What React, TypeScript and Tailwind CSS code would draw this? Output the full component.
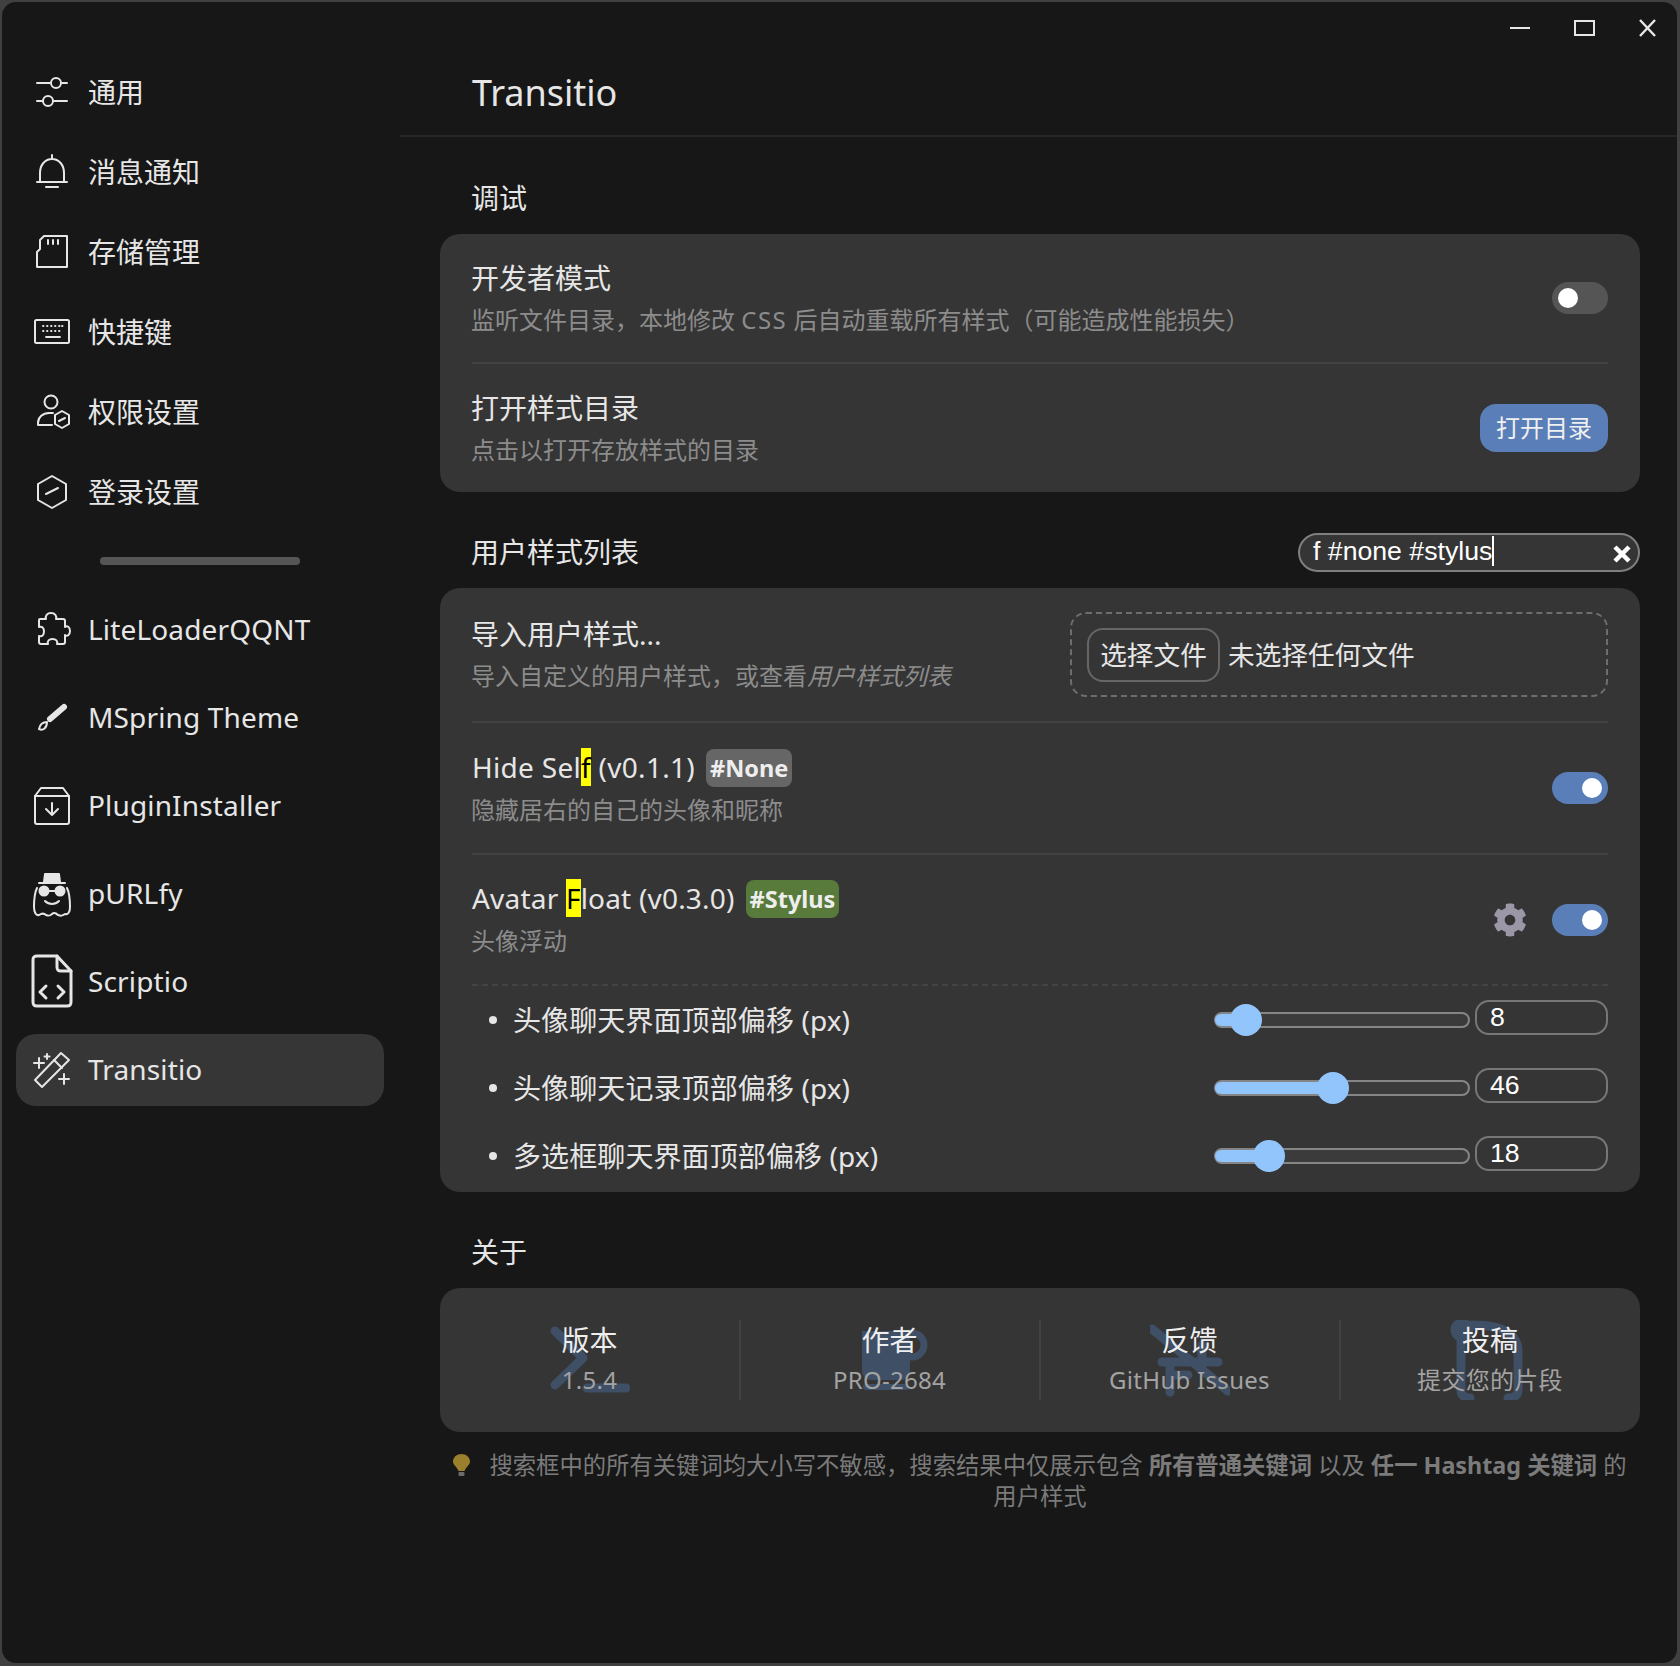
import React from "react";
import { FaCog } from "react-icons/fa";

function Ico({ children }: { children: React.ReactNode }) {
  return (
    <svg viewBox="0 0 40 40" className="w-10 h-10 shrink-0 overflow-visible" fill="none" stroke="#e6e6e6" strokeWidth="2" strokeLinecap="round" strokeLinejoin="round">
      {children}
    </svg>
  );
}

const icons: Record<string, React.ReactNode> = {
  general: (
    <Ico>
      <path d="M5 11H18M30 11H35M5 29H11M21 29H35" />
      <circle cx="24" cy="11" r="5" />
      <circle cx="16" cy="29" r="5" />
    </Ico>
  ),
  bell: (
    <Ico>
      <path d="M20 3V7M5 30H35M8 30V21C8 13 13 7 20 7S32 13 32 21V30M14 35H26" />
    </Ico>
  ),
  sd: (
    <Ico>
      <path d="M12 4H35V35H5V20L8 17V8Z" />
      <path d="M16 8V12M21 8V12M26 8V12" />
    </Ico>
  ),
  keyboard: (
    <Ico>
      <rect x="3" y="8" width="34" height="23" rx="1.5" />
      <path d="M11 14H11.5M15 14H15.5M19 14H19.5M23 14H23.5M27 14H27.5M30 14H30.5M11 19H11.5M15 19H15.5M19 19H19.5M23 19H23.5M27 19H27.5M14 25H28" strokeWidth="1.8" />
    </Ico>
  ),
  perm: (
    <Ico>
      <circle cx="19" cy="10" r="6.5" />
      <path d="M6 33V31C6 25 11 21 17 21H21M6 33H20" />
      <path d="M30 19L37 23V32L30 36L23 32V23Z" />
      <path d="M27 29L33 26" />
    </Ico>
  ),
  login: (
    <Ico>
      <path d="M20 4L34 12V28L20 36L6 28V12Z" />
      <path d="M14 22L26 16" />
    </Ico>
  ),
  puzzle: (
    <Ico>
      <path d="M8 9H14C13 6 15 3 19 3C23 3 25 6 24 9H31C32 9 33 10 33 11V17C35 15 38 17 38 21C38 25 35 27 33 25V32C33 33 32 34 31 34H25C26 31 24 29 20.500 29C17 29 15 31 16 34H9C8 34 7 33 7 32V26C10 27 12 25 12 21.500C12 18 10 16 7 17V10C7 9.500 7.500 9 8 9Z" />
    </Ico>
  ),
  brush: (
    <Ico>
      <path d="M32 9L18 21" strokeWidth="6" />
      <path d="M15 24C11 24 8 26 7 31C11 33 15 30 15 24Z" />
    </Ico>
  ),
  installer: (
    <Ico>
      <path d="M9 2H31L37 10V36C37 37 36 38 35 38H5C4 38 3 37 3 36V10Z" />
      <path d="M3 10H37M20 17V29M14 23L20 29L26 23" />
    </Ico>
  ),
  ghost: (
    <Ico>
      <path d="M7 9H33M12 8L13 0H27L28 8" fill="#e6e6e6" />
      <path d="M5 14C3 18 2 24 2 33C2 38 4 42 7 41C10 39 12 39 14 41C17 42 18 42 20 40C22 38 24 39 26 41C29 42 30 42 33 40C36 41 38 38 38 33C38 24 37 18 35 14" />
      <circle cx="12" cy="17" r="4.5" fill="#e6e6e6" />
      <circle cx="28" cy="17" r="4.5" fill="#e6e6e6" />
      <path d="M16 17H24M13 27C17 31 23 31 27 27" />
    </Ico>
  ),
  file: (
    <Ico>
      <g strokeWidth="3">
        <path d="M25 -6H5C2 -6 1 -5 1 -2V40C1 43 2 44 5 44H35C38 44 39 43 39 40V9Z" />
        <path d="M25 -6V5C25 8 26 9 29 9H39" />
        <path d="M14 24L8 30L14 36M26 24L32 30L26 36" />
      </g>
    </Ico>
  ),
  wand: (
    <Ico>
      <path d="M29 3L37 10L10 37L3 30Z" />
      <path d="M22 10L30 18M7 8V18M2 13H12M15 4V9M12.5 6.5H17.5M32 24V34M27 29H37" />
    </Ico>
  ),
};

const top = [
  ["general", "通用"],
  ["bell", "消息通知"],
  ["sd", "存储管理"],
  ["keyboard", "快捷键"],
  ["perm", "权限设置"],
  ["login", "登录设置"],
];
const plugins = [
  ["puzzle", "LiteLoaderQQNT"],
  ["brush", "MSpring Theme"],
  ["installer", "PluginInstaller"],
  ["ghost", "pURLfy"],
  ["file", "Scriptio"],
  ["wand", "Transitio"],
];

function Sidebar() {
  return (
    <aside className="w-[398px] shrink-0 pt-[50px] pl-[14px] pr-4">
      {top.map(([i, t]) => (
        <div key={t} className="h-20 flex items-center gap-4 pl-4 text-[28px]">
          {icons[i]}
          <span>{t}</span>
        </div>
      ))}
      <div className="h-2 w-[200px] rounded-full bg-[#555555] mx-auto mt-[25px] mb-[29px]" />
      <div className="flex flex-col gap-4">
        {plugins.map(([i, t]) => (
          <div key={t} className={`h-[72px] flex items-center gap-4 pl-4 rounded-[20px] text-[28px] tracking-[0.15px] ${t === "Transitio" ? "bg-[#363636]" : ""}`}>
            {icons[i]}
            <span className="-mt-[2px]">{t}</span>
          </div>
        ))}
      </div>
    </aside>
  );
}

function Toggle({ on }: { on?: boolean }) {
  return (
    <div className={`w-14 h-8 rounded-full shrink-0 flex items-center px-[6px] ${on ? "bg-[#5a7fb8] justify-end" : "bg-[#555555] justify-start"}`}>
      <div className="w-5 h-5 rounded-full bg-white" />
    </div>
  );
}

function Row({ title, sub, right, dash, h }: { title: React.ReactNode; sub: React.ReactNode; right?: React.ReactNode; dash?: boolean; h: string }) {
  return (
    <div className={`mx-8 flex items-center justify-between ${dash ? "border-b-2 border-dashed border-[#444444]" : "border-b-2 border-[#424242]"} ${h}`}>
      <RowText title={title} sub={sub} />
      {right}
    </div>
  );
}

function RowText({ title, sub }: { title: React.ReactNode; sub: React.ReactNode }) {
  return (
    <div className="pt-[1px]">
      <div className={`h-10 leading-10 text-[28px] flex items-center ${typeof title === "string" ? "pt-[2px] -ml-px" : ""}`}>{title}</div>
      <div className="h-[42px] leading-[42px] text-[24px] text-[#8c8c8c] mt-[2px] -ml-px">{sub}</div>
    </div>
  );
}

function Mark({ children }: { children: React.ReactNode }) {
  return <mark className="bg-[#ffff00] text-black">{children}</mark>;
}

function Tag({ children, color }: { children: React.ReactNode; color: string }) {
  return <span className={`ml-[11px] mt-[2px] h-[38px] leading-[38px] px-1 rounded-lg font-bold text-[23.5px] text-[#eeeeee] ${color}`}>{children}</span>;
}

function SliderRow({ label, pos, val }: { label: string; pos: number; val: string }) {
  return (
    <div className="h-[68px] mx-8 flex items-center">
      <div className="w-[8px] h-[8px] rounded-full bg-[#e6e6e6] ml-[17px] mr-4 shrink-0" />
      <div className="text-[28px] flex-1 tracking-[0.1px]">{label}</div>
      <div className="relative w-[256px] h-4 rounded-full border-2 border-[#858585] bg-[#3b3b3b]">
        <div className="absolute -left-[1px] top-0 bottom-0 rounded-full bg-[#93c5fd]" style={{ width: pos }} />
        <div className="absolute top-1/2 -translate-x-1/2 -translate-y-1/2 w-8 h-8 rounded-full bg-[#93c5fd]" style={{ left: pos - 2 }} />
      </div>
      <input
        readOnly
        value={val}
        className="ml-[5px] mb-[5px] w-[133px] h-[35px] rounded-[14px] border-2 border-[#777777] bg-transparent pl-[13px] pb-[2px] text-[26.67px] text-white outline-none font-['Liberation_Sans',sans-serif]"
      />
    </div>
  );
}

function Section({ title, right, children }: { title: string; right?: React.ReactNode; children: React.ReactNode }) {
  return (
    <section>
      <div className="h-14 flex items-center justify-between pl-8 text-[28px] mb-2">
        <span className="-ml-px">{title}</span>
        {right}
      </div>
      <div className="rounded-[20px] bg-[#353535] overflow-hidden">{children}</div>
    </section>
  );
}

function Watermark({ kind }: { kind: number }) {
  const c = "#3f4f66";
  return (
    <svg viewBox="0 0 80 80" className="absolute left-1/2 top-0 -translate-x-1/2 w-20 h-20" fill="none" stroke={c} strokeWidth="9" strokeLinecap="round" strokeLinejoin="round">
      {kind === 0 && <path d="M5 11L33 38L5 65M37 68H76" />}
      {kind === 1 && (
        <g>
          <path d="M12 11H60V50C60 57 55 60 50 60H22C17 60 12 57 12 50Z" fill={c} stroke="none" />
          <circle cx="62" cy="25" r="12" strokeWidth="7" />
          <path d="M16 67H56" strokeWidth="6" />
        </g>
      )}
      {kind === 2 && <path d="M2 9L78 71M12 42H68M20 42V72M52 25V45M20 55H38" />}
      {kind === 3 && (
        <g>
          <path d="M11 10V70C11 75 14 78 20 78M22 5C55 5 68 15 68 32V70C68 75 65 78 58 78" />
          <circle cx="12" cy="10" r="7" />
        </g>
      )}
    </svg>
  );
}

function About() {
  const items = [
    ["版本", "1.5.4"],
    ["作者", "PRO-2684"],
    ["反馈", "GitHub Issues"],
    ["投稿", "提交您的片段"],
  ];
  return (
    <div className="h-[144px] grid grid-cols-4 items-center">
      {items.map(([a, b], i) => (
        <div key={a} className={`relative h-[80px] text-center ${i < 3 ? "border-r-2 border-[#424242] -mr-px" : ""}`}>
          <Watermark kind={i} />
          <div className="relative h-10 leading-10 text-[28px] text-[#eeeeee]">{a}</div>
          <div className="relative h-10 leading-10 text-[24px] tracking-[0.3px] text-[#a3a3a3]">{b}</div>
        </div>
      ))}
    </div>
  );
}

export default function App() {
  return (
    <div className="w-[1680px] h-[1666px] bg-[#404040] pt-[2px] pl-[2px] pr-[3px] pb-[3px] font-['Noto_Sans','Noto_Sans_CJK_SC',sans-serif] text-[#e6e6e6]">
      <div className="relative flex h-full rounded-[14px] bg-[#171717] overflow-hidden">
        <Sidebar />
        <main className="flex-1 min-w-0">
          <div className="absolute top-0 right-0 pt-[14px] flex">
            <svg width="180" height="28" viewBox="0 0 180 28" fill="none" stroke="#e6e6e6" strokeWidth="2">
              <path d="M13 12H33" />
              <rect x="78" y="5" width="19" height="14" />
              <path d="M143 4L158 20M158 4L143 20" strokeWidth="2.4" />
            </svg>
          </div>
          <header className="h-[135px] border-b-2 border-[#272727] flex items-center pl-[72px] pt-[48px] text-[36px]">Transitio</header>
          <div className="pl-10 pr-[37px] pt-[33px] flex flex-col gap-8">
            <Section title="调试">
              <Row h="h-[130px]" title="开发者模式" sub={<>监听文件目录，本地修改 <span className="tracking-[1.5px]">CSS</span> 后自动重载所有样式（可能造成性能损失）</>} right={<Toggle />} />
              <div className="mx-8 h-[128px] flex items-center justify-between">
                <RowText title="打开样式目录" sub="点击以打开存放样式的目录" />
                <button className="w-32 h-12 rounded-2xl bg-[#5a7fb8] text-[24px] text-[#f0f0f0]">打开目录</button>
              </div>
            </Section>
            <Section
              title="用户样式列表"
              right={
                <div className="relative w-[342px] h-[39px] rounded-[20px] border-2 border-[#7f7f7f] bg-[#353535] pl-[13px] pb-[2px] flex items-center font-['Liberation_Sans',sans-serif] text-[26.67px] text-white">
                  <span>f #none #stylus</span>
                  <span className="w-[2px] h-[30px] bg-white" />
                  <svg viewBox="0 0 20 20" className="absolute right-[6px] top-[9px] w-5 h-5" stroke="#ffffff" strokeWidth="4.5">
                    <path d="M3 3L17 17M17 3L3 17" />
                  </svg>
                </div>
              }
            >
              <Row
                h="h-[135px]"
                title="导入用户样式..."
                sub={<span>导入自定义的用户样式，或查看<i>用户样式列表</i></span>}
                right={
                  <div className="w-[538px] h-[85px] rounded-[16px] border-2 border-dashed border-[#6e6e6e] flex items-center pl-[15px] text-[26.67px] text-[#e6e6e6]">
                    <button className="w-[133px] h-[54px] rounded-[16px] border-2 border-[#666666]">选择文件</button>
                    <span className="ml-2">未选择任何文件</span>
                  </div>
                }
              />
              <Row
                h="h-[132px]"
                title={<><span className="tracking-[0.3px]">Hide Sel<Mark>f</Mark> (v0.1.1)</span><Tag color="bg-[#666666]">#None</Tag></>}
                sub="隐藏居右的自己的头像和昵称"
                right={<Toggle on />}
              />
              <Row
                h="h-[131px]"
                dash
                title={<><span className="tracking-[0.2px]">Avatar <Mark>F</Mark>loat (v0.3.0)</span><Tag color="bg-[#587a3a]">#Stylus</Tag></>}
                sub="头像浮动"
                right={
                  <div className="flex items-center gap-[25px]">
                    <FaCog className="w-[34px] h-[34px] text-[#9b97a6]" />
                    <Toggle on />
                  </div>
                }
              />
              <SliderRow label="头像聊天界面顶部偏移 (px)" pos={32} val="8" />
              <SliderRow label="头像聊天记录顶部偏移 (px)" pos={119} val="46" />
              <SliderRow label="多选框聊天界面顶部偏移 (px)" pos={55} val="18" />
              <div className="h-[2px]" />
            </Section>
            <Section title="关于">
              <About />
            </Section>
            <p className="-mt-[14px] px-2 text-center text-[23.33px] leading-[31px] text-[#7b7b7b]">
              <svg viewBox="0 0 17 22" className="inline-block w-[17px] h-[22px] mr-[19px] align-[-2px]">
                <path d="M8.500 0C4 0 0 3 0 7.500C0 11 3.500 12 5.500 17H11.500C13.500 12 17 11 17 7.500C17 3 13 0 8.500 0Z" fill="#9a7f2c" />
                <rect x="5.500" y="18" width="6" height="4" rx="1" fill="#6b6b6b" />
              </svg>
              搜索框中的所有关键词均大小写不敏感，搜索结果中仅展示包含 <b>所有普通关键词</b> 以及 <b>任一 Hashtag 关键词</b> 的用户样式
            </p>
          </div>
        </main>
      </div>
    </div>
  );
}
